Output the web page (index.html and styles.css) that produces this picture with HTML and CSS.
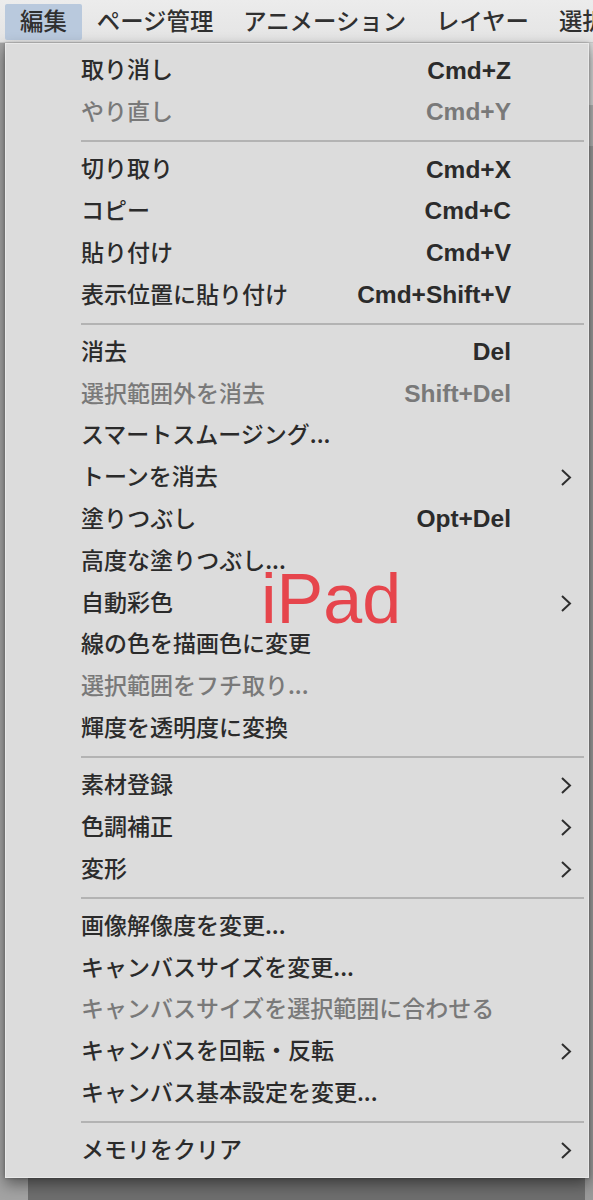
FILE: index.html
```html
<!DOCTYPE html>
<html lang="ja">
<head>
<meta charset="utf-8">
<title>編集メニュー</title>
<link rel="stylesheet" href="styles.css">
</head>
<body>
<div class="app">
  <nav class="menubar">
    <span class="mb-item active">編集</span>
    <span class="mb-item">ページ管理</span>
    <span class="mb-item">アニメーション</span>
    <span class="mb-item">レイヤー</span>
    <span class="mb-item">選択範囲</span>
  </nav>
  <div class="workspace">
    <div class="sidepanel"></div>
    <div class="canvas"></div>
    <div class="rightpanel"><div class="rp-top"></div><div class="rp-mid"></div></div>
  </div>

  <div class="menu">
    <div class="row"><span class="label">取り消し</span><span class="key">Cmd+Z</span><span class="sub"></span></div>
    <div class="row disabled"><span class="label">やり直し</span><span class="key">Cmd+Y</span><span class="sub"></span></div>
    <div class="sep"></div>
    <div class="row"><span class="label">切り取り</span><span class="key">Cmd+X</span><span class="sub"></span></div>
    <div class="row"><span class="label">コピー</span><span class="key">Cmd+C</span><span class="sub"></span></div>
    <div class="row"><span class="label">貼り付け</span><span class="key">Cmd+V</span><span class="sub"></span></div>
    <div class="row"><span class="label">表示位置に貼り付け</span><span class="key">Cmd+Shift+V</span><span class="sub"></span></div>
    <div class="sep"></div>
    <div class="row"><span class="label">消去</span><span class="key">Del</span><span class="sub"></span></div>
    <div class="row disabled"><span class="label">選択範囲外を消去</span><span class="key">Shift+Del</span><span class="sub"></span></div>
    <div class="row"><span class="label">スマートスムージング...</span><span class="key"></span><span class="sub"></span></div>
    <div class="row"><span class="label">トーンを消去</span><span class="key"></span><span class="sub"><svg class="chev" viewBox="0 0 12 18"><path d="M2 1.5 L10 9 L2 16.5"/></svg></span></div>
    <div class="row"><span class="label">塗りつぶし</span><span class="key">Opt+Del</span><span class="sub"></span></div>
    <div class="row"><span class="label">高度な塗りつぶし...</span><span class="key"></span><span class="sub"></span></div>
    <div class="row"><span class="label">自動彩色</span><span class="key"></span><span class="sub"><svg class="chev" viewBox="0 0 12 18"><path d="M2 1.5 L10 9 L2 16.5"/></svg></span></div>
    <div class="row"><span class="label">線の色を描画色に変更</span><span class="key"></span><span class="sub"></span></div>
    <div class="row disabled"><span class="label">選択範囲をフチ取り...</span><span class="key"></span><span class="sub"></span></div>
    <div class="row"><span class="label">輝度を透明度に変換</span><span class="key"></span><span class="sub"></span></div>
    <div class="sep"></div>
    <div class="row"><span class="label">素材登録</span><span class="key"></span><span class="sub"><svg class="chev" viewBox="0 0 12 18"><path d="M2 1.5 L10 9 L2 16.5"/></svg></span></div>
    <div class="row"><span class="label">色調補正</span><span class="key"></span><span class="sub"><svg class="chev" viewBox="0 0 12 18"><path d="M2 1.5 L10 9 L2 16.5"/></svg></span></div>
    <div class="row"><span class="label">変形</span><span class="key"></span><span class="sub"><svg class="chev" viewBox="0 0 12 18"><path d="M2 1.5 L10 9 L2 16.5"/></svg></span></div>
    <div class="sep"></div>
    <div class="row"><span class="label">画像解像度を変更...</span><span class="key"></span><span class="sub"></span></div>
    <div class="row"><span class="label">キャンバスサイズを変更...</span><span class="key"></span><span class="sub"></span></div>
    <div class="row disabled"><span class="label">キャンバスサイズを選択範囲に合わせる</span><span class="key"></span><span class="sub"></span></div>
    <div class="row"><span class="label">キャンバスを回転・反転</span><span class="key"></span><span class="sub"><svg class="chev" viewBox="0 0 12 18"><path d="M2 1.5 L10 9 L2 16.5"/></svg></span></div>
    <div class="row"><span class="label">キャンバス基本設定を変更...</span><span class="key"></span><span class="sub"></span></div>
    <div class="sep"></div>
    <div class="row"><span class="label">メモリをクリア</span><span class="key"></span><span class="sub"><svg class="chev" viewBox="0 0 12 18"><path d="M2 1.5 L10 9 L2 16.5"/></svg></span></div>
  </div>

  <div class="watermark">iPad</div>
</div>
</body>
</html>
```

FILE: styles.css
```css
html, body {
  margin: 0;
  padding: 0;
}
body {
  width: 593px;
  height: 1200px;
  overflow: hidden;
  font-family: "Noto Sans CJK JP", "Noto Sans", sans-serif;
  background: #9c9c9c;
}
.app {
  position: relative;
  width: 593px;
  height: 1200px;
  display: flex;
  flex-direction: column;
}
.menubar {
  height: 43px;
  box-sizing: border-box;
  display: flex;
  align-items: stretch;
  padding: 4px 0 2px 5px;
  background: linear-gradient(#ececec, #e4e4e4);
  border-bottom: 1px solid #c9c9c9;
  white-space: nowrap;
  overflow: hidden;
}
.mb-item {
  display: flex;
  align-items: center;
  padding: 0 15px 2px;
  font-size: 23.4px;
  font-weight: 500;
  color: #303030;
  line-height: 1;
}
.mb-item.active {
  background: #b9c9dd;
  border-radius: 2px;
}
.workspace {
  flex: 1;
  display: flex;
}
.sidepanel {
  width: 28px;
  background: #a3a3a3;
}
.canvas {
  flex: 1;
  background: #6e6e6e;
}
.rightpanel {
  width: 8px;
  display: flex;
  flex-direction: column;
  background: #9a9a9a;
}
.rp-top {
  height: 62px;
  background: #d6d6d6;
  border-bottom: 1px solid #b5b5b5;
}
.rp-mid {
  height: 40px;
  background: #b4b4b4;
}
.menu {
  position: absolute;
  top: 43px;
  left: 5px;
  width: 584px;
  height: 1135px;
  box-sizing: border-box;
  padding: 6px 0;
  background: #dcdcdc;
  border: 1px solid #e9e9e9;
  box-shadow: 0 6px 14px rgba(0, 0, 0, 0.45), 0 0 3px rgba(0, 0, 0, 0.25);
}
.row {
  height: 41.8px;
  display: grid;
  grid-template-columns: 1fr auto 77px;
  align-items: center;
  padding-left: 75px;
  color: #2b2b2b;
}
.row.disabled {
  color: #797979;
}
.label {
  font-size: 23px;
  font-weight: 500;
  line-height: 1;
  padding-bottom: 4px;
  white-space: nowrap;
}
.key {
  font-family: "Liberation Sans", Arial, sans-serif;
  font-size: 24.5px;
  font-weight: 700;
  line-height: 1;
  white-space: nowrap;
}
.sub {
  display: flex;
  justify-content: flex-end;
  padding-right: 16px;
}
.chev {
  width: 12px;
  height: 19px;
  fill: none;
  stroke: #2e2e2e;
  stroke-width: 2;
}
.sep {
  height: 15.3px;
  display: flex;
  align-items: center;
  padding: 0 4px 0 75px;
}
.sep::before {
  content: "";
  flex: 1;
  height: 2px;
  background: #b3b3b3;
}
.watermark {
  position: absolute;
  left: 261px;
  top: 564px;
  font-family: "Liberation Sans", Arial, sans-serif;
  font-size: 70px;
  line-height: 70px;
  color: #e6454c;
}
```
